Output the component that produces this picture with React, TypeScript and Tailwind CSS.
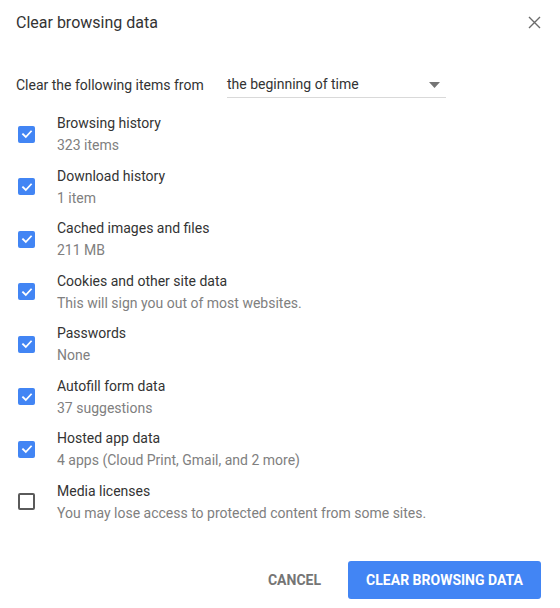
import { useState } from 'react';

type Item = { label: string; detail: string; checked: boolean };

const initialItems: Item[] = [
  { label: 'Browsing history', detail: '323 items', checked: true },
  { label: 'Download history', detail: '1 item', checked: true },
  { label: 'Cached images and files', detail: '211 MB', checked: true },
  { label: 'Cookies and other site data', detail: 'This will sign you out of most websites.', checked: true },
  { label: 'Passwords', detail: 'None', checked: true },
  { label: 'Autofill form data', detail: '37 suggestions', checked: true },
  { label: 'Hosted app data', detail: '4 apps (Cloud Print, Gmail, and 2 more)', checked: true },
  { label: 'Media licenses', detail: 'You may lose access to protected content from some sites.', checked: false },
];

function Checkbox({ checked, onToggle }: { checked: boolean; onToggle: () => void }) {
  return (
    <button
      type="button"
      onClick={onToggle}
      className={
        checked
          ? 'flex h-[17px] w-[17px] shrink-0 items-center justify-center rounded-[2px] bg-[#4285f4]'
          : 'h-[17px] w-[17px] shrink-0 rounded-[2px] border-2 border-[#5a5a5a] bg-white'
      }
    >
      {checked && (
        <svg width="12" height="12" viewBox="0 0 12 12" fill="none">
          <path d="M2 6.2 L4.8 9 L10 3.4" stroke="white" strokeWidth="1.8" strokeLinecap="square" />
        </svg>
      )}
    </button>
  );
}

export default function App() {
  const [items, setItems] = useState(initialItems);

  const toggle = (index: number) => {
    setItems((prev) => prev.map((item, i) => (i === index ? { ...item, checked: !item.checked } : item)));
  };

  return (
    <div className="h-[608px] w-[560px] bg-white font-['Roboto',sans-serif] text-[#333333]">
      <div className="flex h-[45px] items-center justify-between pl-4 pr-[19px]">
        <span className="text-[16px]">Clear browsing data</span>
        <svg width="13" height="13" viewBox="0 0 13 13" className="text-[#6b6b6b]">
          <path d="M1 1 L12 12 M12 1 L1 12" stroke="currentColor" strokeWidth="1.4" />
        </svg>
      </div>

      <div className="mt-[24px] flex h-[32px] items-center pl-4 text-[14px]">
        <span className="w-[211px] text-[#333333]">Clear the following items from</span>
        <div className="flex h-[26px] w-[219px] items-center justify-between border-b border-[#d9d9d9] pr-[6px]">
          <span>the beginning of time</span>
          <svg width="11" height="6" viewBox="0 0 11 6">
            <path d="M0 0 H11 L5.5 6 Z" fill="#757575" />
          </svg>
        </div>
      </div>

      <div className="mt-[7px]">
        {items.map((item, i) => (
          <div key={item.label} className="flex h-[52.5px] items-center gap-[22px] pl-[18px]">
            <Checkbox checked={item.checked} onToggle={() => toggle(i)} />
            <div className="flex flex-col text-[14px] leading-[22px]">
              <span className="text-[#333333]">{item.label}</span>
              <span className="text-[#808080]">{item.detail}</span>
            </div>
          </div>
        ))}
      </div>

      <div className="mt-[33px] flex items-center justify-end gap-[11px] pr-[19px]">
        <button type="button" className="h-[38px] px-4 text-[14px] font-bold uppercase text-[#757575]">
          Cancel
        </button>
        <button
          type="button"
          className="h-[38px] w-[193px] rounded-[3px] bg-[#4285f4] text-[14px] font-bold uppercase text-white"
        >
          Clear browsing data
        </button>
      </div>
    </div>
  );
}
